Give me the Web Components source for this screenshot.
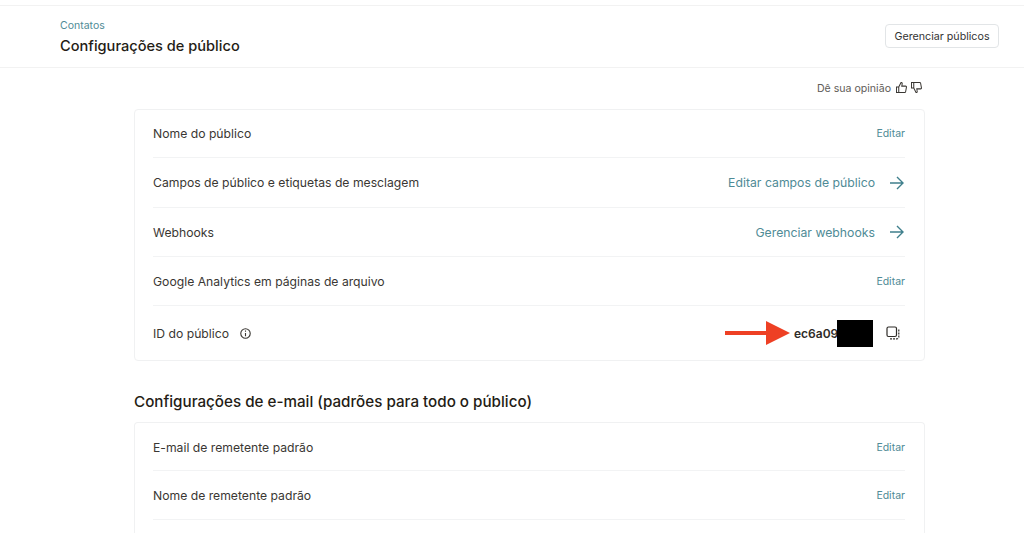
<!DOCTYPE html>
<html lang="pt">
<head>
<meta charset="utf-8">
<title>Configurações de público</title>
<style>
  html, body { margin: 0; height: 100%; overflow: hidden; background: #fff; }
  body { font-family: Inter, "Liberation Sans", sans-serif; color: #241c15; }
</style>
</head>
<body>
<page-header></page-header>
<settings-page></settings-page>

<script>
const TEAL = '#4f8b96'

const headerTemplate = document.createElement('template')
headerTemplate.innerHTML = /* html */ `
<style>
  :host {
    display: flex;
    box-sizing: border-box;
    height: 63px;
    margin-top: 5px;
    padding: 13px 25px 0 60px;
    justify-content: space-between;
    align-items: flex-start;
    border-top: 1px solid #f2f2f2;
    border-bottom: 1px solid #f2f2f2;
  }
  .crumb { font-size: 10.5px; line-height: 13px; color: ${TEAL}; }
  h1 { margin: 4px 0 0; font-size: 14.6px; line-height: 20px; font-weight: 500; color: #241c15; }
  button {
    margin-top: 5px;
    height: 24px;
    width: 114px;
    padding: 0;
    font: 10.7px Inter, sans-serif;
    color: #333;
    background: #fff;
    border: 1px solid #e2e5e7;
    border-radius: 4px;
  }
</style>
<div>
  <div class="crumb">Contatos</div>
  <h1>Configurações de público</h1>
</div>
<button>Gerenciar públicos</button>
`
class PageHeader extends HTMLElement {
  constructor() {
    super()
    this.attachShadow({ mode: 'open' })
    this.shadowRoot.appendChild(headerTemplate.content.cloneNode(true))
  }
}
customElements.define('page-header', PageHeader)

const rowTemplate = document.createElement('template')
rowTemplate.innerHTML = /* html */ `
<style>
  :host {
    display: flex;
    box-sizing: border-box;
    align-items: center;
    justify-content: space-between;
    height: var(--row-height, 48px);
    padding-top: var(--row-nudge, 0);
    border-bottom: 1px solid #f2f3f4;
    font-size: 12.2px;
    color: #3a3733;
  }
  :host([last]) { border-bottom: 0; }
  .label, .value { display: flex; align-items: center; }
</style>
<div class="label"><slot name="label"></slot></div>
<div class="value"><slot></slot></div>
`
class SettingsRow extends HTMLElement {
  constructor() {
    super()
    this.attachShadow({ mode: 'open' })
    this.shadowRoot.appendChild(rowTemplate.content.cloneNode(true))
  }
}
customElements.define('settings-row', SettingsRow)

const linkTemplate = document.createElement('template')
linkTemplate.innerHTML = /* html */ `
<style>
  :host { display: inline-flex; align-items: center; color: ${TEAL}; font-size: 10.5px; }
  :host([arrow]) { font-size: 12.25px; }
  svg { display: none; margin-left: 14px; }
  :host([arrow]) svg { display: block; }
</style>
<slot></slot>
<svg width="16" height="14" viewBox="0 0 16 14" fill="none" stroke="#3f7f8c" stroke-width="1.4">
  <path d="M1 7h13M8 1l6 6-6 6"/>
</svg>
`
class ActionLink extends HTMLElement {
  constructor() {
    super()
    this.attachShadow({ mode: 'open' })
    this.shadowRoot.appendChild(linkTemplate.content.cloneNode(true))
  }
}
customElements.define('action-link', ActionLink)

const idTemplate = document.createElement('template')
idTemplate.innerHTML = /* html */ `
<style>
  :host { display: inline-flex; align-items: center; margin-right: 5px; font-size: 12px; font-weight: 600; color: #2f2c28; }
  .arrow { margin-right: 4px; display: block; }
  .code { position: relative; width: 79px; }
  .mask { position: absolute; left: 43px; top: -6px; width: 36px; height: 27px; background: #000; }
  .copy { margin-left: 13px; display: block; }
</style>
<svg class="arrow" width="65" height="24" viewBox="0 0 65 24"><path d="M0 10h41V0l24 12-24 12V14H0z" fill="#ee4024"/></svg>
<div class="code">ec6a09<div class="mask"></div></div>
<svg class="copy" width="14" height="14" viewBox="0 0 14 14" fill="none" stroke="#2f2c28" stroke-width="1.2">
  <rect x="1" y="1" width="9.5" height="9.5" rx="1.5"/>
  <path d="M12.8 3.5v7.5a1.8 1.8 0 0 1-1.8 1.8H3.5" stroke-dasharray="2 1"/>
</svg>
`
class AudienceId extends HTMLElement {
  constructor() {
    super()
    this.attachShadow({ mode: 'open' })
    this.shadowRoot.appendChild(idTemplate.content.cloneNode(true))
  }
}
customElements.define('audience-id', AudienceId)

const pageTemplate = document.createElement('template')
pageTemplate.innerHTML = /* html */ `
<style>
  :host { display: block; width: 791px; margin-left: 134px; }
  .feedback {
    display: flex;
    align-items: center;
    justify-content: flex-end;
    gap: 5px;
    height: 41px;
    padding-right: 3px;
    font-size: 10.6px;
    color: #5f5c58;
  }
  .feedback svg { display: block; }
  .thumbs { display: flex; gap: 4px; margin-top: -2px; }
  .card {
    border: 1px solid #f0f1f2;
    border-radius: 4px;
    padding: 0 19px 0 18px;
  }
  .first settings-row:nth-child(2) { --row-height: 50px; }
  .first settings-row:nth-child(3), .first settings-row:nth-child(4) { --row-height: 49px; }
  .first settings-row:last-child { --row-height: 54px; }
  .second { border-bottom: 0; border-radius: 4px 4px 0 0; }
  .second settings-row:first-child { --row-nudge: 1px; }
  .second settings-row:nth-child(2) { --row-height: 49px; }
  .second settings-row:last-child { --row-height: 13px; }
  h2 { margin: 30px 0 10px; font-size: 15.2px; line-height: 21px; font-weight: 500; color: #241c15; }
  .info { margin-left: 11px; display: block; }
</style>
<div class="feedback">
  <span>Dê sua opinião</span>
  <div class="thumbs">
    <svg width="11" height="11" viewBox="0 0 12 12" fill="none" stroke="#3a3733" stroke-width="1.1"><path d="M.5 5.500h2.500v6H.5zM3 5.500l2.500-5c1 0 1.500.7 1.200 1.800L6.300 4.500h4.200c.6 0 1 .5.9 1.100l-.9 5c-.1.500-.4.900-1 .900H3"/></svg>
    <svg width="11" height="11" viewBox="0 0 12 12" fill="none" stroke="#3a3733" stroke-width="1.1" style="transform:rotate(180deg) scaleX(-1)"><path d="M.5 5.500h2.500v6H.5zM3 5.500l2.500-5c1 0 1.500.7 1.200 1.800L6.300 4.500h4.200c.6 0 1 .5.9 1.100l-.9 5c-.1.500-.4.900-1 .900H3"/></svg>
  </div>
</div>
<div class="card first">
  <settings-row><span slot="label">Nome do público</span><action-link>Editar</action-link></settings-row>
  <settings-row><span slot="label">Campos de público e etiquetas de mesclagem</span><action-link arrow>Editar campos de público</action-link></settings-row>
  <settings-row><span slot="label">Webhooks</span><action-link arrow>Gerenciar webhooks</action-link></settings-row>
  <settings-row><span slot="label">Google Analytics em páginas de arquivo</span><action-link>Editar</action-link></settings-row>
  <settings-row last>
    <span slot="label">ID do público</span>
    <svg slot="label" class="info" width="11" height="11" viewBox="0 0 10 10" fill="none" stroke="#3a3733"><circle cx="5" cy="5" r="4.300"/><path d="M5 4.500v3M5 2.300v1"/></svg>
    <audience-id></audience-id>
  </settings-row>
</div>
<h2>Configurações de e-mail (padrões para todo o público)</h2>
<div class="card second">
  <settings-row><span slot="label">E-mail de remetente padrão</span><action-link>Editar</action-link></settings-row>
  <settings-row><span slot="label">Nome de remetente padrão</span><action-link>Editar</action-link></settings-row>
  <settings-row last></settings-row>
</div>
`
class SettingsPage extends HTMLElement {
  constructor() {
    super()
    this.attachShadow({ mode: 'open' })
    this.shadowRoot.appendChild(pageTemplate.content.cloneNode(true))
  }
}
customElements.define('settings-page', SettingsPage)
</script>
</body>
</html>
